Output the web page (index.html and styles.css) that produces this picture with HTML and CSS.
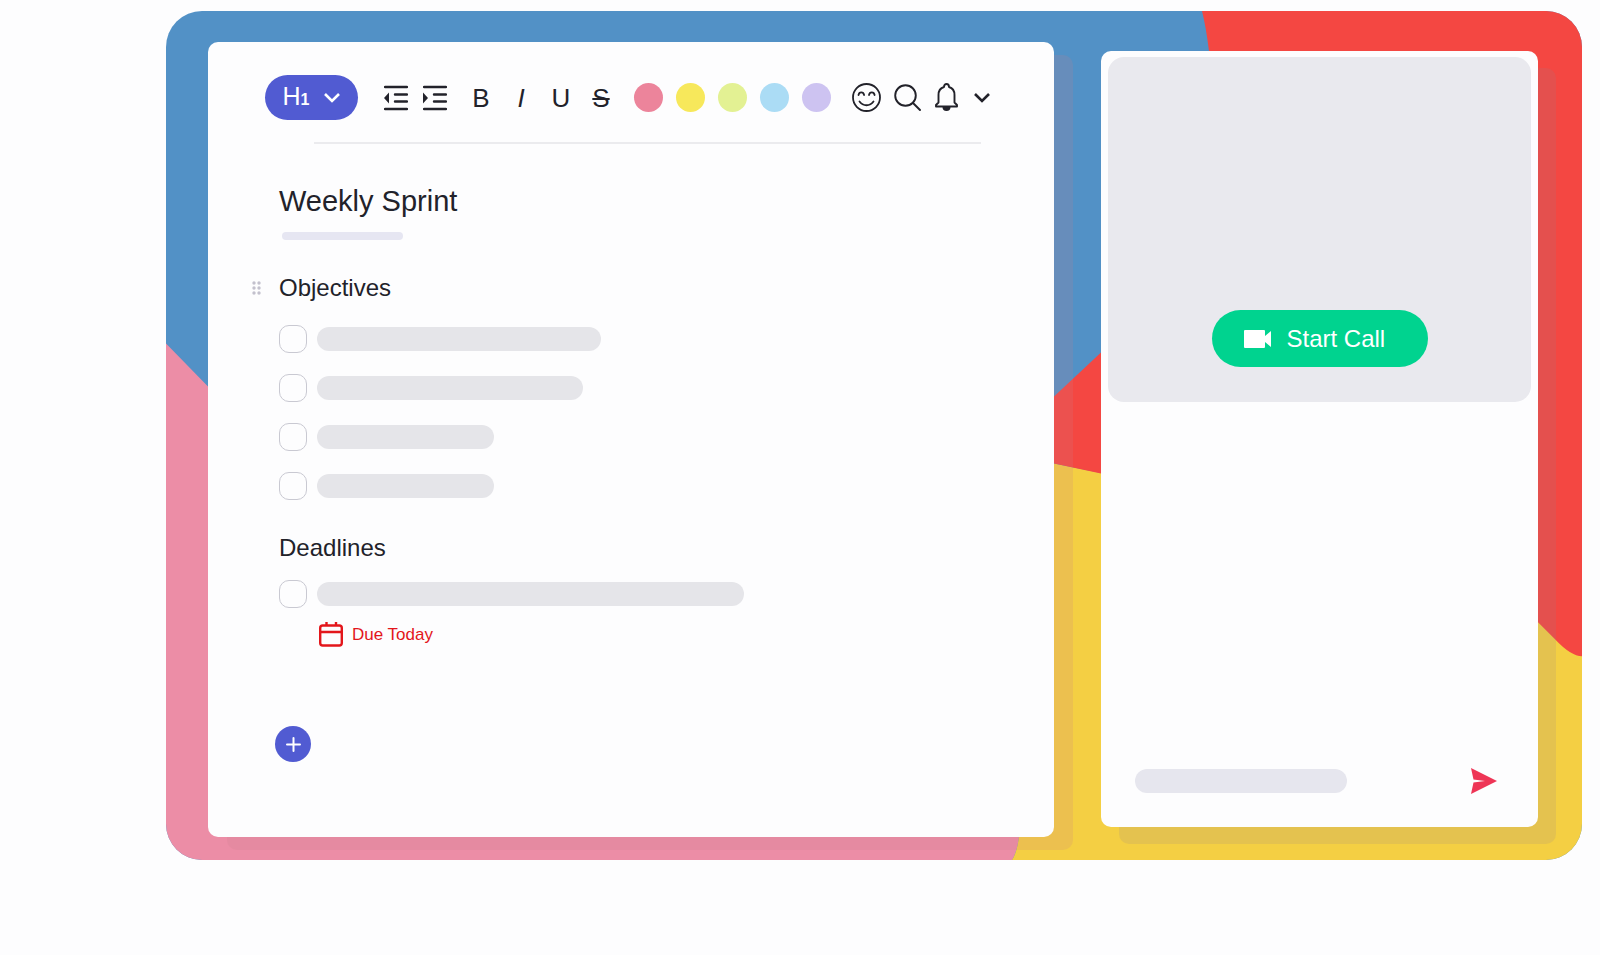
FILE: index.html
```html
<!DOCTYPE html>
<html lang="en">

<head>
    <meta charset="UTF-8">
    <meta name="viewport" content="width=device-width, initial-scale=1.0">
    <title>Weekly Sprint</title>
    <link rel="stylesheet" href="styles.css">
</head>

<body>
    <main class="stage">
        <svg class="stage-bg" viewBox="0 0 1416 850" preserveAspectRatio="none" aria-hidden="true">
            <rect width="1416" height="850" fill="#5291c6" />
            <path fill="#ec8da6" d="M0 333 42 376 500 640 853 827Q851 842 846 850H0z" />
            <path fill="#f4cf43" d="M870 449 888 453 1416 560V850H846Q851 842 853 827z" />
            <path fill="#f44742" d="M1036 0Q1040 16 1043 40C1062 170 1010 280 935 342L888 386 870 449 888 453 935 463C1100 500 1290 520 1372 612L1389 629Q1405 646 1416 646V0z" />
        </svg>

        <section class="card doc">
            <div class="toolbar">
                <button class="heading-btn" type="button">
                    <span class="heading-label">H<small>1</small></span>
                    <svg width="16" height="10" viewBox="0 0 16 10" fill="none" stroke="currentColor" stroke-width="2.6"><path d="M1 1l7 7 7-7" /></svg>
                </button>

                <div class="tools indent">
                    <button class="tool" type="button" aria-label="Outdent">
                        <svg width="24" height="26" viewBox="0 0 24 26"><path d="M1 2h22M11 9.500h12M11 16.500h12M1 24h22" stroke="currentColor" stroke-width="2.4" stroke-linecap="round" /><path d="M5 7.500v11L0 13z" fill="currentColor" /></svg>
                    </button>
                    <button class="tool" type="button" aria-label="Indent">
                        <svg width="24" height="26" viewBox="0 0 24 26"><path d="M1 2h22M11 9.500h12M11 16.500h12M1 24h22" stroke="currentColor" stroke-width="2.4" stroke-linecap="round" /><path d="M0 7.500v11L5 13z" fill="currentColor" /></svg>
                    </button>
                </div>

                <div class="tools format">
                    <button class="tool" type="button">B</button>
                    <button class="tool italic" type="button">I</button>
                    <button class="tool" type="button">U</button>
                    <button class="tool strike" type="button">S</button>
                </div>

                <div class="tools colors">
                    <button class="dot pink" type="button" aria-label="Pink"></button>
                    <button class="dot yellow" type="button" aria-label="Yellow"></button>
                    <button class="dot lime" type="button" aria-label="Lime"></button>
                    <button class="dot blue" type="button" aria-label="Blue"></button>
                    <button class="dot violet" type="button" aria-label="Violet"></button>
                </div>

                <div class="tools extra">
                    <button class="tool" type="button" aria-label="Emoji">
                        <svg width="29" height="29" viewBox="0 0 29 29" fill="none" stroke="currentColor" stroke-width="1.8" stroke-linecap="round"><circle cx="14.500" cy="14.500" r="13.500" /><path d="M6.500 12c.6-3.500 5-3.500 5.600 0M17 12c.6-3.500 5-3.500 5.600 0M7.500 18.500c3.500 5 10.500 5 14 0" /></svg>
                    </button>
                    <button class="tool" type="button" aria-label="Search">
                        <svg width="27" height="27" viewBox="0 0 27 27" fill="none" stroke="currentColor" stroke-width="1.9" stroke-linecap="round"><circle cx="11.500" cy="11.500" r="10.300" /><path d="M19 19l7 7" /></svg>
                    </button>
                    <button class="tool" type="button" aria-label="Notifications">
                        <svg width="23" height="29" viewBox="0 0 23 29"><path d="M1 23.500v-1.500l2.500-2.500V12c0-4.500 2-7 5.500-8 0-4 5-4 5 0 3.500 1 5.500 3.500 5.500 8v7.500L22 22v1.500z" fill="none" stroke="currentColor" stroke-width="1.9" stroke-linejoin="round" /><path d="M7.500 24h8a4 4 0 0 1-8 0z" fill="currentColor" /></svg>
                    </button>
                    <button class="tool more" type="button" aria-label="More">
                        <svg width="16" height="10" viewBox="0 0 16 10" fill="none" stroke="currentColor" stroke-width="2.600"><path d="M1 1l7 7 7-7" /></svg>
                    </button>
                </div>
            </div>
            <hr class="divider">

            <div class="content">
                <h1 class="title">Weekly Sprint</h1>
                <div class="title-line"></div>

                <h2 class="subtitle">
                    <svg class="handle" width="9" height="14" viewBox="0 0 9 14" fill="#c3c1cd"><circle cx="2" cy="2" r="1.700" /><circle cx="7" cy="2" r="1.700" /><circle cx="2" cy="7" r="1.700" /><circle cx="7" cy="7" r="1.700" /><circle cx="2" cy="12" r="1.700" /><circle cx="7" cy="12" r="1.700" /></svg>
                    Objectives
                </h2>
                <div class="tasks">
                    <div class="task"><input class="check" type="checkbox" aria-label="Objective 1"><span class="bar" style="width: 284px"></span></div>
                    <div class="task"><input class="check" type="checkbox" aria-label="Objective 2"><span class="bar" style="width: 266px"></span></div>
                    <div class="task"><input class="check" type="checkbox" aria-label="Objective 3"><span class="bar" style="width: 177px"></span></div>
                    <div class="task"><input class="check" type="checkbox" aria-label="Objective 4"><span class="bar" style="width: 177px"></span></div>
                </div>

                <h2 class="subtitle">Deadlines</h2>
                <div class="tasks deadlines">
                    <div class="task"><input class="check" type="checkbox" aria-label="Deadline 1"><span class="bar" style="width: 427px"></span></div>
                </div>
                <p class="due">
                    <svg width="24" height="25" viewBox="0 0 24 25" fill="none" stroke="currentColor" stroke-width="2.400"><rect x="1.200" y="3.500" width="21.600" height="20" rx="2.500" /><path d="M1 10h22M7.500 0v4M17 0v4" /></svg>
                    Due Today
                </p>
                <button class="add" type="button" aria-label="Add">
                    <svg width="15" height="15" viewBox="0 0 15 15" stroke="currentColor" stroke-width="2" stroke-linecap="round"><path d="M7.500 1v13M1 7.500h13" /></svg>
                </button>
            </div>
        </section>

        <aside class="card side">
            <div class="video">
                <button class="call" type="button">
                    <svg width="28" height="18" viewBox="0 0 28 18" fill="currentColor"><path d="M1 0h19q1 0 1 1v5l6-5v16l-6-5v5q0 1-1 1H1q-1 0-1-1V1q0-1 1-1z" /></svg>
                    Start Call
                </button>
            </div>
            <div class="message">
                <span class="bar message-bar"></span>
                <button class="send" type="button" aria-label="Send">
                    <svg width="26" height="26" viewBox="0 0 26 26" fill="currentColor"><path d="M0 0l26 13L0 26l2.500-11.500L14 13 2.500 11.500z" /></svg>
                </button>
            </div>
        </aside>
    </main>
</body>

</html>
```

FILE: styles.css
```css
*,
*::before,
*::after {
    box-sizing: border-box;
}

body {
    margin: 0;
    background-color: #fdfdfe;
    color: #22222a;
    font-family: "Liberation Sans", Arial, sans-serif;
}

h1,
h2,
p {
    margin: 0;
    font-weight: 400;
}

button {
    padding: 0;
    border: none;
    background: none;
    color: inherit;
    font-family: inherit;
    cursor: pointer;
}

svg {
    display: block;
    flex-shrink: 0;
}

.stage {
    position: relative;
    display: grid;
    grid-template-columns: 846fr 437fr;
    gap: 47px;
    margin: 11px 18px 11px 166px;
    padding: 31px 44px 23px 42px;
    border-radius: 36px;
    overflow: hidden;
}

.stage-bg {
    position: absolute;
    inset: 0;
    width: 100%;
    height: 100%;
}

.card {
    position: relative;
    min-width: 0;
    background-color: #fdfdfe;
    border-radius: 10px;
}

/* document */
.doc {
    padding: 33px 0 75px;
    box-shadow: 19px 13px 0 rgba(200, 130, 140, 0.18);
}

.toolbar {
    display: flex;
    align-items: center;
    padding-left: 57px;
}

.heading-btn {
    display: flex;
    align-items: center;
    justify-content: center;
    gap: 15px;
    width: 93px;
    height: 45px;
    border-radius: 23px;
    background-color: #515bd2;
    color: #fff;
}

.heading-label {
    font-size: 25px;
    line-height: 28px;
}

.heading-label small {
    font-size: 16px;
    font-weight: 700;
}

.tools {
    display: flex;
    align-items: center;
}

.tool {
    display: flex;
    align-items: center;
    justify-content: center;
    min-width: 24px;
    font-size: 26px;
    line-height: 30px;
}

.more {
    min-width: 16px;
}

.indent {
    gap: 15px;
    margin-left: 26px;
}

.format {
    gap: 16px;
    margin-left: 22px;
}

.italic {
    font-style: italic;
}

.strike {
    text-decoration: line-through 2px;
}

.colors {
    gap: 13px;
    margin-left: 21px;
}

.dot {
    width: 29px;
    height: 29px;
    border-radius: 50%;
}

.pink {
    background-color: #ec849b;
}

.yellow {
    background-color: #f7e85b;
}

.lime {
    background-color: #e3f193;
}

.blue {
    background-color: #abdcf5;
}

.violet {
    background-color: #cdc3f1;
}

.extra {
    gap: 13px;
    margin-left: 21px;
}

.more {
    margin-left: 3px;
}

.divider {
    height: 2px;
    margin: 22px 73px 0 106px;
    border: none;
    background-color: #ebebee;
}

.content {
    padding: 40px 71px 0;
}

.title {
    font-size: 29px;
    line-height: 34px;
}

.title-line {
    width: 121px;
    height: 8px;
    margin: 14px 0 0 3px;
    border-radius: 4px;
    background-color: #e6e6f2;
}

.subtitle {
    display: flex;
    align-items: center;
    margin-top: 34px;
    font-size: 24px;
    line-height: 28px;
}

.handle {
    margin: 0 18px 0 -27px;
}

.tasks {
    display: flex;
    flex-direction: column;
    gap: 21px;
    margin-top: 23px;
}

.deadlines {
    margin-top: 18px;
}

.task {
    display: flex;
    align-items: center;
    gap: 10px;
}

.check {
    appearance: none;
    flex-shrink: 0;
    width: 28px;
    height: 28px;
    margin: 0;
    border: 1px solid #c9c9d2;
    border-radius: 10px;
}

.check:checked {
    background-color: #515bd2;
}

.bar {
    height: 24px;
    border-radius: 12px;
    background-color: #e5e5e9;
}

.due {
    display: flex;
    align-items: center;
    gap: 9px;
    margin: 14px 0 0 40px;
    color: #e3161b;
    font-size: 17px;
    line-height: 24px;
}

.add {
    display: flex;
    align-items: center;
    justify-content: center;
    width: 36px;
    height: 36px;
    margin: 79px 0 0 -4px;
    border-radius: 50%;
    background-color: #515bd2;
    color: #fff;
}

/* call panel */
.side {
    display: flex;
    flex-direction: column;
    justify-content: space-between;
    margin: 9px 0 10px;
    padding: 6px 7px 33px;
    box-shadow: 18px 17px 0 rgba(150, 130, 140, 0.16);
}

.video {
    display: flex;
    align-items: flex-end;
    justify-content: center;
    padding: 253px 0 35px;
    border-radius: 16px;
    background-color: #e9e9ee;
}

.call {
    display: flex;
    align-items: center;
    gap: 15px;
    width: 216px;
    height: 57px;
    padding-left: 32px;
    border-radius: 29px;
    background-color: #00d38f;
    color: #fff;
    font-size: 24px;
    line-height: 28px;
}

.message {
    display: flex;
    align-items: center;
    justify-content: space-between;
    padding: 0 34px 0 27px;
}

.message-bar {
    width: 212px;
    background-color: #e6e6ee;
}

.send {
    color: #ee3556;
}
```
